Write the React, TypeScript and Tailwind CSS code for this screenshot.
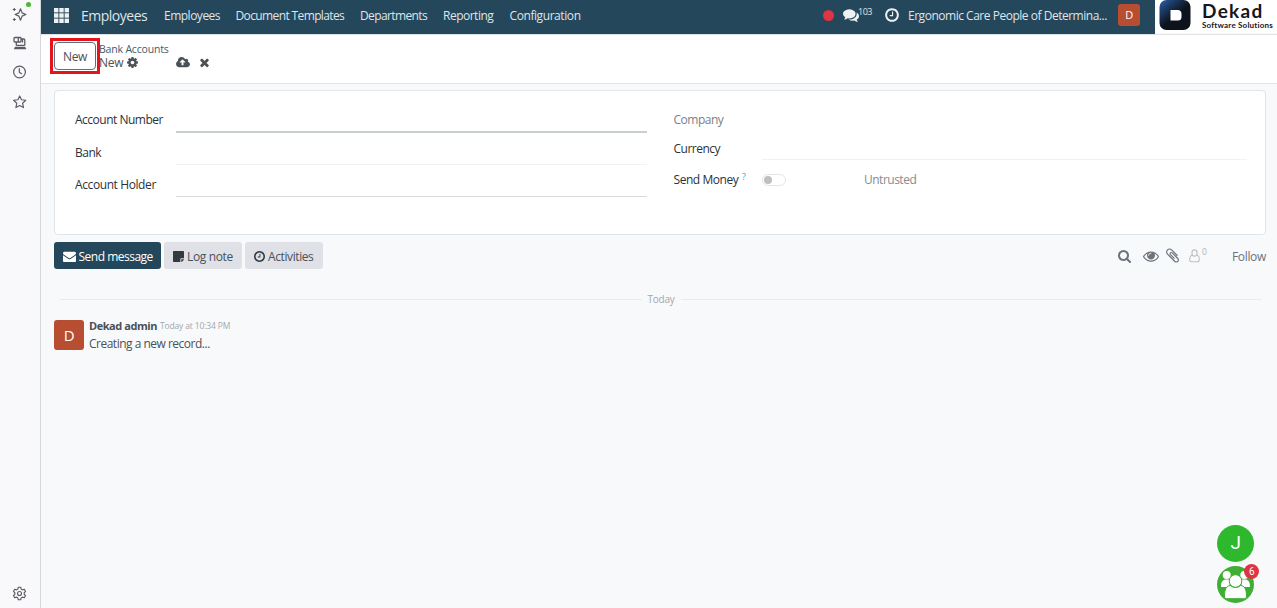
import React from "react";

type IconProps = { className?: string };

function Glyph({ w = 1792, d, className }: IconProps & { w?: number; d: string }) {
  return (
    <svg viewBox={`0 0 ${w} 1792`} fill="currentColor" className={className} aria-hidden="true">
      <path d={d} />
    </svg>
  );
}

const CLOCK =
  "M896 544v448q0 14-9 23t-23 9h-320q-14 0-23-9t-9-23v-64q0-14 9-23t23-9h224v-352q0-14 9-23t23-9h64q14 0 23 9t9 23zm416 352q0-148-73-273t-198-198-273-73-273 73-198 198-73 273 73 273 198 198 273 73 273-73 198-198 73-273zm224 0q0 209-103 385.5t-279.5 279.5-385.5 103-385.5-103-279.5-279.5-103-385.5 103-385.5 279.5-279.5 385.5-103 385.5 103 279.5 279.5 103 385.5z";
const COMMENTS =
  "M1408 768q0 139-94 257t-256.5 186.5-353.5 68.5q-86 0-176-16-124 88-278 128-36 9-86 16h-3q-11 0-20.5-8t-11.5-21q-1-3-1-6.5t.5-6.5 2-6l2.5-5 3.5-5.5 4-5 4.5-5 4-4.5q5-6 23-25t26-29.5 22.5-29 25-38.5 20.5-44q-124-72-195-177t-71-224q0-139 94-257t256.5-186.5 353.5-68.5 353.5 68.5 256.5 186.5 94 257zm384 256q0 120-71 224.5t-195 176.5q10 24 20.5 44t25 38.5 22.5 29 26 29.5 23 25q1 1 4 4.5t4.5 5 4 5 3.5 5.5l2.5 5 2 6 .5 6.5-1 6.5q-3 14-13 22t-22 7q-50-7-86-16-154-40-278-128-90 16-176 16-271 0-472-132 58 4 88 4 161 0 309-45t264-129q125-92 192-212t67-254q0-77-23-152 129 71 204 178t75 230z";
const ENVELOPE =
  "M1792 710v794q0 66-47 113t-113 47h-1472q-66 0-113-47t-47-113v-794q44 49 101 87 362 246 497 345 57 42 92.5 65.5t94.5 48 110 24.5h2q51 0 110-24.5t94.5-48 92.5-65.5q170-123 498-345 57-39 100-87zm0-294q0 79-49 151t-122 123q-376 261-468 325-10 7-42.5 31t-54 38.5-52 32.5-57.5 27-50 9h-2q-23 0-50-9t-57.5-27-52-32.5-54-38.5-42.5-31q-91-64-262-182.5t-205-142.5q-62-42-117-115.5t-55-136.5q0-78 41.5-130t118.5-52h1472q65 0 112.5 47t47.5 113z";
const CLOUD_UPLOAD =
  "M1280 864q0-14-9-23l-352-352q-9-9-23-9t-23 9l-351 351q-10 12-10 24 0 14 9 23t23 9h224v352q0 13 9.5 22.5t22.5 9.5h192q13 0 22.5-9.5t9.5-22.5v-352h224q13 0 22.5-9.5t9.5-22.5zm640 288q0 159-112.5 271.5t-271.5 112.5h-1088q-185 0-316.5-131.5t-131.5-316.5q0-130 70-240t188-165q-2-30-2-43 0-212 150-362t362-150q156 0 285.5 87t188.5 231q71-62 166-62 106 0 181 75t75 181q0 76-41 138 130 31 213.5 135.5t83.5 238.5z";
const SEARCH =
  "M1152 832q0-185-131.5-316.5t-316.5-131.5-316.5 131.5-131.5 316.5 131.5 316.5 316.5 131.5 316.5-131.5 131.5-316.5zm512 832q0 52-38 90t-90 38q-54 0-90-38l-343-342q-179 124-399 124-143 0-273.5-55.5t-225-150-150-225-55.5-273.5 55.5-273.5 150-225 225-150 273.5-55.5 273.5 55.5 225 150 150 225 55.5 273.5q0 220-124 399l343 343q37 37 37 90z";
const COG =
  "M1024 896q0-106-75-181t-181-75-181 75-75 181 75 181 181 75 181-75 75-181zm512-109v222q0 12-8 23t-20 13l-185 28q-19 54-39 91 35 50 107 138 10 12 10 25t-9 23q-27 37-99 108t-94 71q-12 0-26-9l-138-108q-44 23-91 38-16 136-29 186-7 28-36 28h-222q-14 0-24.5-8.5t-11.5-21.5l-28-184q-49-16-90-37l-141 107q-10 9-25 9-14 0-25-11-126-114-165-168-7-10-7-23 0-12 8-23 15-21 51-66.5t54-70.5q-27-50-41-99l-183-27q-13-2-21-12.5t-8-23.5v-222q0-12 8-23t19-13l186-28q14-46 39-92-40-57-107-138-10-12-10-24 0-10 9-23 26-36 98.5-107.5t94.5-71.5q13 0 26 10l138 107q44-23 91-38 16-136 29-186 7-28 36-28h222q14 0 24.5 8.5t11.5 21.5l28 184q49 16 90 37l142-107q9-9 24-9 13 0 25 10 129 119 165 170 7 8 7 22 0 12-8 23-15 21-51 66.5t-54 70.5q26 50 41 98l183 28q13 2 21 12.5t8 23.5z";
const TIMES =
  "M1298 1322q0 40-28 68l-136 136q-28 28-68 28t-68-28l-294-294-294 294q-28 28-68 28t-68-28l-136-136q-28-28-28-68t28-68l294-294-294-294q-28-28-28-68t28-68l136-136q28-28 68-28t68 28l294 294 294-294q28-28 68-28t68 28l136 136q28 28 28 68t-28 68l-294 294 294 294q28 28 28 68z";
const NOTE =
  "M1024 1248v416h-928q-40 0-68-28t-28-68v-1344q0-40 28-68t68-28h1344q40 0 68 28t28 68v928h-416q-40 0-68 28t-28 68zm128 32h381q-15 82-65 132l-184 184q-50 50-132 65v-381z";
const CLIP =
  "M1404 1385q0 117-79 196t-196 79q-135 0-235-100l-777-776q-113-115-113-271 0-159 110-270t269-111q158 0 273 113l605 606q10 10 10 22 0 16-30.5 46.5t-46.5 30.5q-13 0-23-10l-606-607q-79-77-181-77-106 0-179 75t-73 181q0 105 76 181l776 777q63 63 145 63 64 0 106-42t42-106q0-82-63-145l-581-581q-26-24-60-24-29 0-48 19t-19 48q0 32 25 59l410 410q10 10 10 22 0 16-31 47t-47 31q-12 0-22-10l-410-410q-63-61-63-149 0-82 57-139t139-57q88 0 149 63l581 581q100 98 100 235z";
const EYE =
  "M1664 960q-152-236-381-353 61 104 61 225 0 185-131.5 316.5t-316.5 131.5-316.5-131.5-131.5-316.5q0-121 61-225-229 117-381 353 133 205 333.5 326.5t434.5 121.5 434.5-121.5 333.5-326.5zm-720-384q0-20-14-34t-34-14q-125 0-214.5 89.5t-89.5 214.5q0 20 14 34t34 14 34-14 14-34q0-86 61-147t147-61q20 0 34-14t14-34zm848 384q0 34-20 69-140 230-376.5 368.5t-499.5 138.5-499.5-139-376.5-368q-20-35-20-69t20-69q140-229 376.5-368t499.5-139 499.5 139 376.5 368q20 35 20 69z";

function Sidebar() {
  return (
    <aside className="flex w-[41px] shrink-0 flex-col items-center border-r border-[#d5d7dc] bg-[#f9f9fb] pr-[1px] text-[#5b5b66]">
      <div className="relative mt-[7px] h-[15px] w-[15px]">
        <svg viewBox="0 0 15 15" className="h-[15px] w-[15px]" fill="none" stroke="currentColor" strokeWidth="1.2" strokeLinejoin="round">
          <path d="M8.500 1.800 10.100 5.900 13.900 7.500 10.100 9.100 8.500 13.200 6.900 9.100 3.100 7.500 6.900 5.900Z" />
          <path d="M2.300 1v3M.8 2.500h3M2.300 11v3M.8 12.500h3" strokeWidth="1.100" />
        </svg>
        <span className="absolute -top-[5px] left-[14px] h-[5px] w-[5px] rounded-full bg-[#4cb830]" />
      </div>
      <svg viewBox="0 0 14 14" className="mt-[14px] h-[14px] w-[14px]" fill="none" stroke="currentColor" strokeWidth="1.3">
        <rect x="1" y="1.500" width="7" height="4.500" rx=".8" />
        <path d="M5.300 1.500v4.500M8 3h2.800q1 0 1 1v5.500M3.300 6v3.500M11.800 9.300H3.300M9.500 3v3.500" />
        <path d="M2.200 11h9.800l1 2H1.200Z" fill="currentColor" strokeWidth=".5" />
      </svg>
      <svg viewBox="0 0 14 14" className="mt-[15px] h-[14px] w-[14px]" fill="none" stroke="currentColor" strokeWidth="1.2" strokeLinecap="round">
        <circle cx="6.500" cy="7" r="5.9" />
        <path d="M6.300 3.6v3.600l2.300 1.500" />
      </svg>
      <svg viewBox="0 0 14 14" className="mt-[16px] h-[14px] w-[14px]" fill="none" stroke="currentColor" strokeWidth="1.15" strokeLinejoin="round">
        <path d="M6.700 .9 8.500 4.8 12.800 5.3 9.6 8.2 10.500 12.6 6.700 10.5 2.900 12.6 3.800 8.2 .6 5.3 4.900 4.8Z" />
      </svg>
      <svg viewBox="0 0 24 24" className="mt-auto mb-[7px] h-[15px] w-[15px]" fill="none" stroke="currentColor" strokeWidth="1.800" strokeLinejoin="round">
        <path d="M10 2h4l.7 3 2 1.2 3-.9 2 3.4-2.2 2.1v2.4l2.2 2.1-2 3.4-3-.9-2 1.2L14 22h-4l-.7-3-2-1.2-3 .9-2-3.4 2.2-2.1v-2.4L2.3 8.700l2-3.400 3 .9 2-1.2Z" />
        <circle cx="12" cy="12" r="3.200" />
      </svg>
    </aside>
  );
}

function Brand() {
  return (
    <div className="flex h-[33px] w-[122px] shrink-0 bg-white pl-[4px]">
      <svg viewBox="0 0 32 30" className="h-[30px] w-[32px] shrink-0">
        <defs>
          <linearGradient id="brand" x1="0" y1="0" x2="0.65" y2="0.75">
            <stop offset="0" stopColor="#2b62ad" />
            <stop offset="0.35" stopColor="#1b3964" />
            <stop offset="0.75" stopColor="#0d131c" />
          </linearGradient>
        </defs>
        <rect x="0.500" y="0" width="31" height="30" rx="7" fill="url(#brand)" />
        <path d="M11.500 10h7.300a4 4 0 0 1 3.700 4v3a3.600 3.600 0 0 1-3.600 3.600h-7.400z" fill="#fff" />
      </svg>
      <div className="ml-[11px] flex flex-col whitespace-nowrap text-[#15171a]">
        <span className="h-[21px] font-['Lato'] text-[19px] leading-[22px] font-bold tracking-[1.300px]">Dekad</span>
        <span className="h-[9px] font-['Lato'] text-[8px] leading-[9px] font-bold tracking-[0.200px]">Software Solutions</span>
      </div>
    </div>
  );
}

function Navbar() {
  return (
    <header className="flex h-[35px] shrink-0 border-b border-[#dfe3e8]">
      <div className="flex h-[34px] w-[1114px] items-center bg-[#25475b] pl-[12.500px] text-[12px] text-[#dfe5e9]">
        <svg viewBox="0 0 15 15" className="-mt-[4px] h-[15px] w-[15px] shrink-0" fill="#eef1f3">
          {[0, 5.3, 10.6].map((y) =>
            [0, 5.3, 10.6].map((x) => <rect key={`${x}-${y}`} x={x} y={y} width="4.400" height="4.400" />)
          )}
        </svg>
        <div className="-mt-[3px] flex items-center leading-[18px] tracking-[-0.620px] whitespace-nowrap">
          <span className="ml-[12.500px] w-[83px] text-[14px] tracking-[-0.500px]">Employees</span>
          <span className="w-[71.500px] tracking-[-0.500px]">Employees</span>
          <span className="w-[124.500px]">Document Templates</span>
          <span className="w-[83px]">Departments</span>
          <span className="w-[66.500px] tracking-[-0.500px]">Reporting</span>
          <span className="tracking-[-0.420px]">Configuration</span>
        </div>
        <div className="-mt-[4px] ml-auto flex items-center whitespace-nowrap">
          <span className="h-[11px] w-[11px] rounded-full bg-[#dc3545]" />
          <Glyph d={COMMENTS} className="ml-[9px] h-[16px] w-[16px] text-[#eef1f3]" />
          <span className="-mt-[6px] -ml-[1px] w-[27px] text-[9px] leading-[12px]">103</span>
          <Glyph w={1536} d={CLOCK} className="h-[16px] w-[14px] text-[#eef1f3]" />
          <span className="mt-[1px] ml-[9px] w-[210px] leading-[18px] tracking-[-0.480px]">Ergonomic Care People of Determina...</span>
          <span className="mr-[15px] flex h-[22px] w-[22px] items-center justify-center rounded-[3px] bg-[#b74e31] text-[11px] text-white">D</span>
        </div>
      </div>
      <Brand />
    </header>
  );
}

function ControlPanel() {
  return (
    <div className="flex h-[49px] shrink-0 items-start border-b border-[#e2e4e7] bg-white pl-[9px] text-[12px] text-[#4a5157]">
      <div className="z-10 mt-[3px] flex h-[36px] w-[50px] items-center justify-center border-[3px] border-[#e3151b]">
        <button className="h-[28px] w-[42px] shrink-0 rounded-[4px] border border-[#5a7382] bg-white pt-[1px] leading-[24px] tracking-[-0.300px]">New</button>
      </div>
      <div className="-ml-[1px] mt-[7px] whitespace-nowrap">
        <div className="h-[13px] text-[10.500px] leading-[14px] tracking-[-0.180px] text-[#3f5c6d]">Bank Accounts</div>
        <div className="flex h-[15px] items-center leading-[15px]">
          <span className="w-[28px] tracking-[-0.300px]">New</span>
          <Glyph w={1536} d={COG} className="h-[13px] w-[11px]" />
          <Glyph w={1920} d={CLOUD_UPLOAD} className="ml-[38px] h-[13px] w-[14px]" />
          <Glyph w={1408} d={TIMES} className="ml-[9px] h-[13px] w-[11px]" />
        </div>
      </div>
    </div>
  );
}

function FormSheet() {
  return (
    <section className="mt-[6px] mr-[11px] ml-[13px] flex h-[145px] shrink-0 rounded-[4px] border border-[#e2e5e8] bg-white pl-[20px] text-[12px] leading-[18px] text-[#2c3238]">
      <div className="flex w-[572px] shrink-0 flex-col">
        <div className="mt-[9px] flex h-[33px]">
          <span className="w-[101px] pt-[11px] whitespace-nowrap">Account Number</span>
          <div className="flex-1 border-b-2 border-[#c8cfd3]" />
        </div>
        <div className="flex h-[32px]">
          <span className="w-[101px] pt-[11px]">Bank</span>
          <div className="flex-1 border-b border-[#f1f2f3]" />
        </div>
        <div className="flex h-[32px]">
          <span className="w-[101px] pt-[11px] tracking-[-0.400px] whitespace-nowrap">Account Holder</span>
          <div className="flex-1 border-b border-[#d8dadd]" />
        </div>
      </div>
      <div className="ml-[26.500px] flex w-[573px] flex-col">
        <div className="mt-[20px] h-[18px] text-[#7b8187]">Company</div>
        <div className="flex h-[31px]">
          <span className="w-[88.500px] pt-[11px]">Currency</span>
          <div className="flex-1 border-b border-[#f1f2f3]" />
        </div>
        <div className="mt-[11px] flex h-[18px] items-center whitespace-nowrap">
          <span className="w-[68.500px] tracking-[-0.450px]">Send Money</span>
          <span className="-mt-[6px] w-[20px] text-[8.500px] text-[#17a2b8]">?</span>
          <span className="flex h-[12px] w-[24px] items-center rounded-full border border-[#e4e5e7] pl-[1px]">
            <span className="h-[8px] w-[8px] rounded-full bg-[#bfbfbf]" />
          </span>
          <span className="ml-[78px] text-[#868c92]">Untrusted</span>
        </div>
      </div>
    </section>
  );
}

function Chatter() {
  return (
    <section className="mr-[10px] ml-[13px] flex flex-1 flex-col text-[12px] text-[#4a5157]">
      <div className="mt-[7px] flex h-[27px] items-center whitespace-nowrap">
        <button className="flex h-[27px] w-[107px] items-center rounded-[3px] bg-[#25475b] pt-[2px] pl-[9px] text-white">
          <Glyph d={ENVELOPE} className="mr-[2.500px] h-[13px] w-[13px] shrink-0" />
          Send message
        </button>
        <button className="ml-[3px] flex h-[27px] w-[78px] items-center rounded-[3px] bg-[#dfe1e6] pt-[2px] pl-[9px]">
          <Glyph w={1536} d={NOTE} className="mr-[3px] h-[13px] w-[11px] shrink-0 text-[#343a40]" />
          <span className="tracking-[-0.350px]">Log note</span>
        </button>
        <button className="ml-[3px] flex h-[27px] w-[78px] items-center rounded-[3px] bg-[#dfe1e6] pt-[2px] pl-[9px]">
          <Glyph w={1536} d={CLOCK} className="mr-[3px] h-[13px] w-[11px] shrink-0 text-[#343a40]" />
          <span className="tracking-[-0.400px]">Activities</span>
        </button>
        <div className="ml-auto flex items-center text-[#6b737b]">
          <Glyph w={1664} d={SEARCH} className="h-[14px] w-[13px]" />
          <Glyph d={EYE} className="ml-[12px] h-[16px] w-[16px]" />
          <Glyph w={1408} d={CLIP} className="ml-[7.500px] h-[17px] w-[13px]" />
          <svg viewBox="0 0 11 14" className="ml-[10px] h-[14px] w-[11px] text-[#bcc0c5]" fill="none" stroke="currentColor" strokeWidth="1.1">
            <rect x="3" y=".9" width="5" height="6.200" rx="2.500" />
            <path d="M3 6.300C1.400 6.600.7 8.400.7 10.600c0 1.400.7 2.100 1.800 2.100h6c1.100 0 1.800-.7 1.800-2.100 0-2.200-.7-4-2.300-4.300" />
          </svg>
          <span className="-mt-[8px] ml-[2px] w-[30px] text-[8.500px] leading-[12px] text-[#aeb3b8]">0</span>
          <span className="mt-[2px] w-[35px] tracking-[-0.350px]">Follow</span>
        </div>
      </div>
      <div className="mt-[22px] mr-[5px] ml-[6px] flex h-[16px] items-center text-[10px] tracking-[-0.200px] text-[#a3a7ab]">
        <span className="h-px flex-1 bg-[#e9ebed]" />
        <span className="w-[39px] text-center">Today</span>
        <span className="h-px flex-1 bg-[#e9ebed]" />
      </div>
      <div className="mt-[13px] flex whitespace-nowrap">
        <span className="flex h-[30px] w-[30px] items-center justify-center rounded-[3px] bg-[#b74e31] text-[15px] text-white">D</span>
        <div className="-mt-[2px] ml-[5px]">
          <div className="flex h-[16px] items-center">
            <span className="w-[71px] text-[11px] font-bold tracking-[-0.450px]">Dekad admin</span>
            <span className="text-[8.500px] tracking-[-0.150px] text-[#a3a7ab]">Today at 10:34 PM</span>
          </div>
          <div className="h-[18px] pt-[1px] leading-[18px]">Creating a new record...</div>
        </div>
      </div>
    </section>
  );
}

function FloatingChats() {
  return (
    <div className="absolute right-[22px] bottom-[5px] flex w-[39px] flex-col items-center gap-[4px]">
      <span className="flex h-[37px] w-[37px] items-center justify-center rounded-full bg-[#2eb82e] font-['Roboto'] text-[19px] text-white">J</span>
      <div className="relative h-[37px] w-[37px]">
        <svg viewBox="0 0 37 37" className="h-[37px] w-[37px]">
          <circle cx="18.500" cy="18.500" r="18.500" fill="#3fae35" />
          <g fill="#fff">
            <circle cx="9.700" cy="9" r="4" />
            <circle cx="27.300" cy="9" r="4" />
            <path d="M4 20.500c0-5 2-7 5-7h3.500v7.500H5q-1 0-1-.5zM33 20.500c0-5-2-7-5-7h-3.500v7.500H32q1 0 1-.5z" />
          </g>
          <g fill="#fff" stroke="#3fae35" strokeWidth="1">
            <circle cx="18.500" cy="15" r="6.300" />
            <path d="M7.500 30c0-6.500 2-10.500 6-10.500 3 2.700 7 2.700 10 0 4 0 6 4 6 10.500 0 2-.8 2.700-2.200 2.700H9.700C8.300 32.700 7.500 32 7.500 30Z" />
          </g>
        </svg>
        <span className="absolute -top-[2px] left-[27px] flex h-[15px] w-[15px] items-center justify-center rounded-full bg-[#dc3545] font-['Roboto'] text-[10px] text-white">6</span>
      </div>
    </div>
  );
}

export default function App() {
  return (
    <div className="relative flex h-[608px] w-[1277px] overflow-hidden bg-[#f8f9fb] font-['Open_Sans','Noto_Sans',sans-serif] tracking-[-0.500px]">
      <Sidebar />
      <main className="flex min-w-0 flex-1 flex-col">
        <Navbar />
        <ControlPanel />
        <FormSheet />
        <Chatter />
      </main>
      <FloatingChats />
    </div>
  );
}
